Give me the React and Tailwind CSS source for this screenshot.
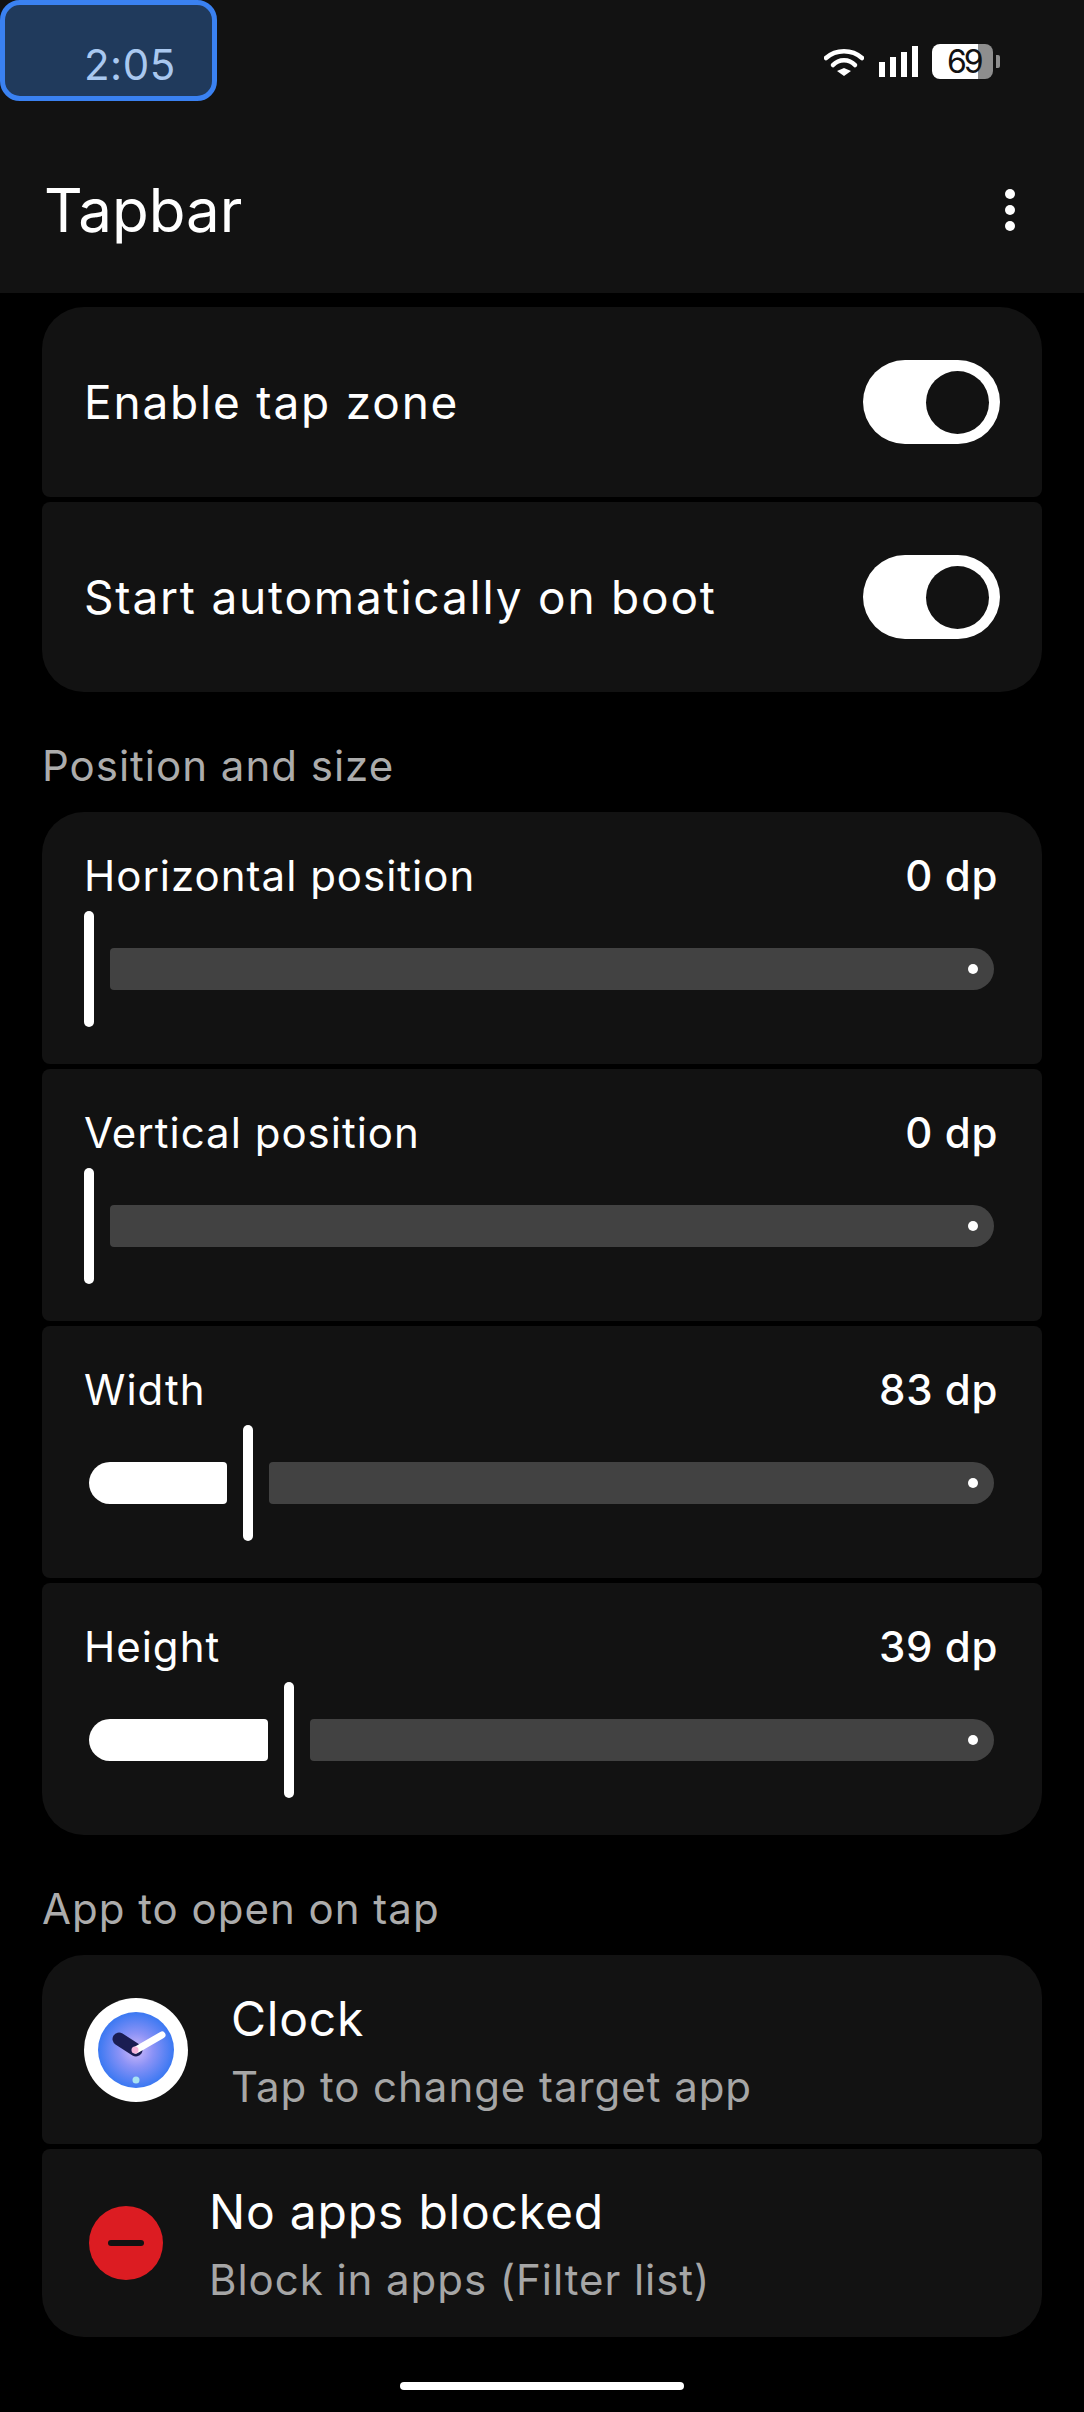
import React from "react";

function StatusIcons() {
  return (
    <div className="flex items-center mt-[22px]">
      <svg width="40" height="28" viewBox="0 0 40 28" className="mr-[15px]">
        <path d="M2 10 C12 1 28 1 38 10" fill="none" stroke="#fff" strokeWidth="4.5" strokeLinecap="round" />
        <path d="M9 17 C15 10.5 25 10.5 31 17" fill="none" stroke="#fff" strokeWidth="4.5" strokeLinecap="round" />
        <path d="M13 23 L20 20 L27 23 L20 28 Z" fill="#fff" />
      </svg>
      <div className="flex items-end gap-[5px] h-[31px] mr-[14px]">
        <div className="w-[6px] h-[15px] bg-white" />
        <div className="w-[6px] h-[20px] bg-white" />
        <div className="w-[6px] h-[25px] bg-white" />
        <div className="w-[6px] h-[31px] bg-white" />
      </div>
      <div className="flex items-center">
        <div className="flex w-[61px] h-[35px] relative">
          <div className="w-[46px] bg-white rounded-l-[8px]" />
          <div className="flex-1 bg-[#8e8e8e] rounded-r-[8px]" />
          <span className="absolute left-[15px] top-0 text-[32px] leading-[35px] text-[#111] font-['Inter',sans-serif] tracking-[-3px]">
            69
          </span>
        </div>
        <div className="w-[4px] h-[13px] ml-[3px] bg-[#8e8e8e] rounded-r-[2px]" />
      </div>
    </div>
  );
}

function Toggle() {
  return (
    <div className="w-[137px] h-[84px] rounded-full bg-white flex items-center justify-end pr-[11px]">
      <div className="w-[63px] h-[63px] rounded-full bg-[#121212]" />
    </div>
  );
}

function ToggleRow({ label, className }) {
  return (
    <div className={"h-[190px] bg-[#121212] flex items-center justify-between pl-[42px] pr-[42px] " + className}>
      <span className="text-[46px] text-white tracking-[1.8px]">{label}</span>
      <Toggle />
    </div>
  );
}

function SliderRow({ label, value, fill, className }) {
  return (
    <div className={"h-[252px] bg-[#121212] pl-[42px] pr-[48px] pt-[35px] " + className}>
      <div className="flex justify-between items-center h-[56px]">
        <span className="text-[42px] text-white tracking-[1px]">{label}</span>
        <span className="text-[42px] text-white tracking-[0.6px] font-medium mr-[-4px]">{value}</span>
      </div>
      <div className="flex items-center mt-[8px] h-[116px]">
        {fill && <div className={"h-[42px] ml-[5px] mr-[16px] bg-white rounded-l-[21px] rounded-r-[4px] " + fill} />}
        <div className="w-[10px] h-[116px] rounded-full bg-white shrink-0" />
        <div className="flex-1 h-[42px] ml-[16px] bg-[#424242] rounded-l-[4px] rounded-r-[21px] flex items-center justify-end pr-[16px]">
          <div className="w-[10px] h-[10px] rounded-full bg-white" />
        </div>
      </div>
    </div>
  );
}

function SectionLabel({ children, className }) {
  return <div className={"text-[42px] text-[#acacac] tracking-[1px] " + className}>{children}</div>;
}

function ClockIcon() {
  return (
    <svg width="104" height="104" viewBox="0 0 104 104" className="shrink-0">
      <defs>
        <radialGradient id="face" cx="50%" cy="50%" r="50%">
          <stop offset="0%" stopColor="#d2baf9" />
          <stop offset="45%" stopColor="#8a92f6" />
          <stop offset="100%" stopColor="#3a78f2" />
        </radialGradient>
      </defs>
      <circle cx="52" cy="52" r="52" fill="#fff" />
      <circle cx="52" cy="52" r="38" fill="url(#face)" />
      <line x1="35" y1="41" x2="52" y2="52" stroke="#1a1d52" strokeWidth="13" strokeLinecap="round" />
      <line x1="52" y1="52" x2="78" y2="37" stroke="#fff" strokeWidth="7" strokeLinecap="round" />
      <circle cx="51" cy="52" r="3.5" fill="#f7b6dc" />
      <circle cx="52" cy="82" r="3.5" fill="#a8e3f2" />
    </svg>
  );
}

export default function App() {
  return (
    <div className="w-[1084px] h-[2412px] bg-black relative overflow-hidden font-['Inter',sans-serif]">
      <div className="bg-[#121212] h-[293px]">
        <div className="h-[101px] flex justify-between items-center pl-0 pr-[84px]">
          <div className="w-[217px] h-[101px] bg-[#203a5c] border-[5px] border-[#3a81f1] rounded-[20px] pl-[79px] pt-[35px] text-[42px] leading-[50px] text-[#a9c8f0] tracking-[0.5px]">
            2:05
          </div>
          <StatusIcons />
        </div>
        <div className="flex justify-between items-center h-[118px] pl-[44px] pr-[69px] mt-[50px]">
          <span className="text-[60px] text-white">Tapbar</span>
          <div className="flex flex-col gap-[6px]">
            <div className="w-[10px] h-[10px] rounded-full bg-white" />
            <div className="w-[10px] h-[10px] rounded-full bg-white" />
            <div className="w-[10px] h-[10px] rounded-full bg-white" />
          </div>
        </div>
      </div>

      <div className="px-[42px] pt-[14px]">
        <div className="flex flex-col gap-[5px]">
          <ToggleRow label="Enable tap zone" className="rounded-t-[42px] rounded-b-[8px]" />
          <ToggleRow label="Start automatically on boot" className="rounded-t-[8px] rounded-b-[42px]" />
        </div>

        <SectionLabel className="mt-[50px] mb-[23px] h-[47px] leading-[47px]">Position and size</SectionLabel>
        <div className="flex flex-col gap-[5px]">
          <SliderRow label="Horizontal position" value="0 dp" className="rounded-t-[42px] rounded-b-[8px]" />
          <SliderRow label="Vertical position" value="0 dp" className="rounded-[8px]" />
          <SliderRow label="Width" value="83 dp" fill="w-[138px]" className="rounded-[8px]" />
          <SliderRow label="Height" value="39 dp" fill="w-[179px]" className="rounded-t-[8px] rounded-b-[42px]" />
        </div>

        <SectionLabel className="mt-[50px] mb-[23px] h-[47px] leading-[47px]">App to open on tap</SectionLabel>
        <div className="flex flex-col gap-[5px]">
          <div className="h-[189px] bg-[#121212] rounded-t-[42px] rounded-b-[8px] flex items-center pl-[42px]">
            <ClockIcon />
            <div className="ml-[43px] pt-[10px] flex flex-col">
              <span className="text-[48px] leading-[64px] text-white tracking-[0.8px]">Clock</span>
              <span className="text-[42px] leading-[72px] text-[#a6a6a6] tracking-[0.95px]">Tap to change target app</span>
            </div>
          </div>
          <div className="h-[188px] bg-[#121212] rounded-t-[8px] rounded-b-[42px] flex items-center pl-[47px]">
            <div className="w-[74px] h-[74px] rounded-full bg-[#dc1c22] flex items-center justify-center shrink-0">
              <div className="w-[36px] h-[6px] rounded-full bg-[#121212]" />
            </div>
            <div className="ml-[46px] pt-[10px] flex flex-col">
              <span className="text-[48px] leading-[64px] text-white tracking-[0.8px]">No apps blocked</span>
              <span className="text-[42px] leading-[72px] text-[#a6a6a6] tracking-[0.95px]">Block in apps (Filter list)</span>
            </div>
          </div>
        </div>
      </div>

      <div className="absolute left-[400px] top-[2382px] w-[284px] h-[8px] rounded-full bg-white" />
    </div>
  );
}
